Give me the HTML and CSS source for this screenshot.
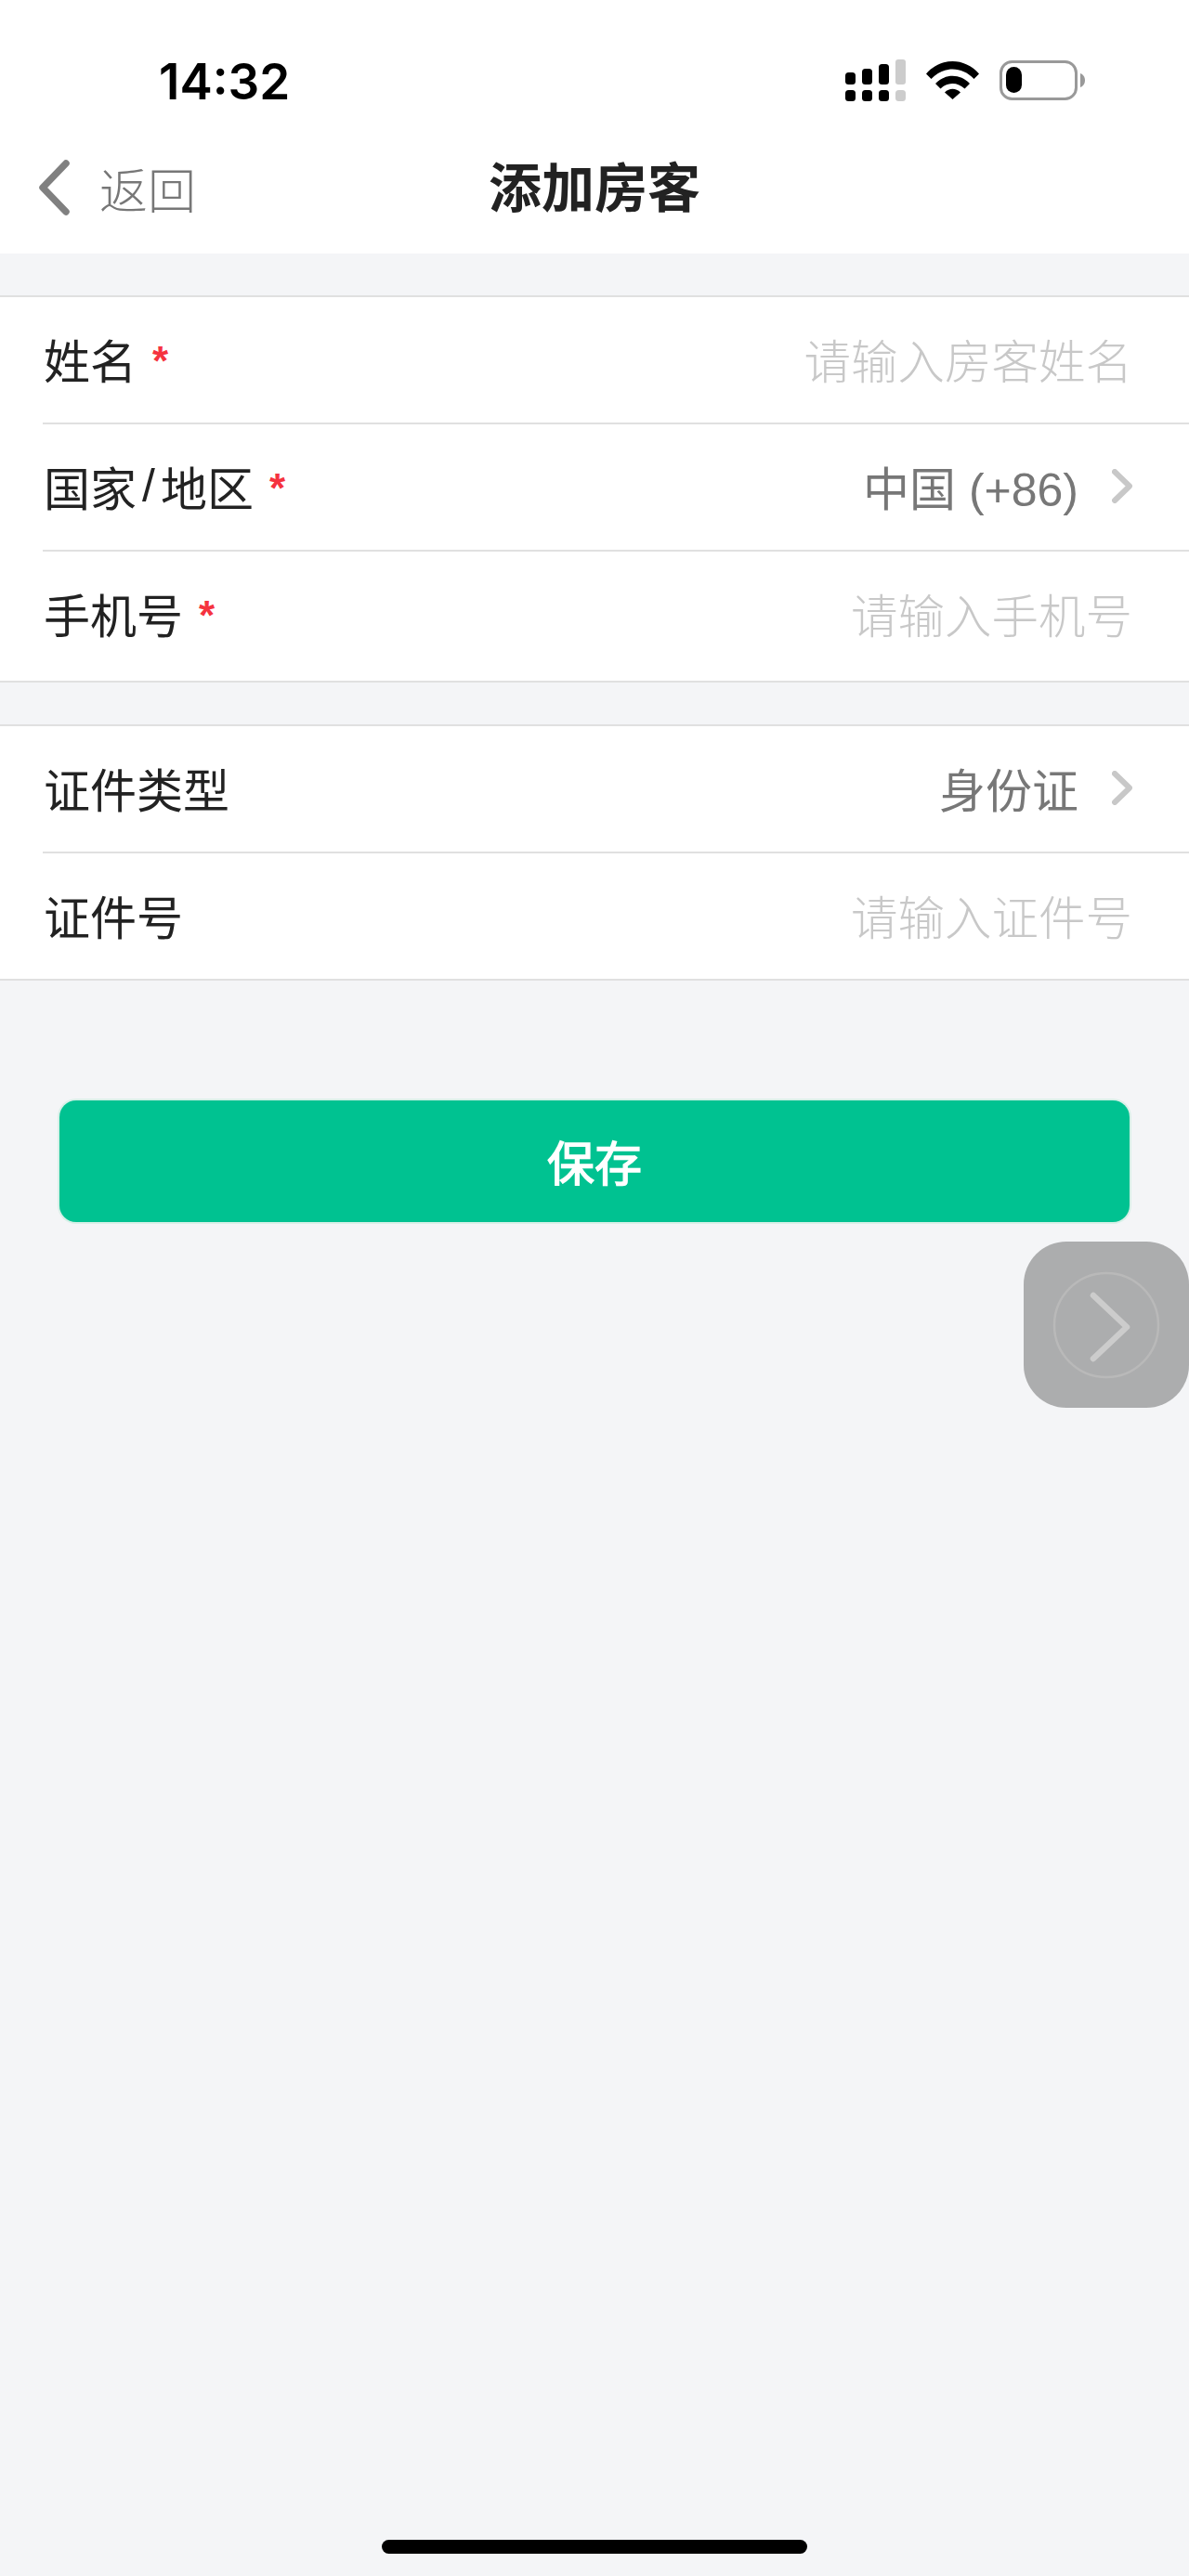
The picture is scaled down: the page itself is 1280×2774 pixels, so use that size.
FILE: index.html
```html
<!DOCTYPE html>
<html lang="zh-CN">
<head>
<meta charset="utf-8"/>
<meta content="width=device-width, initial-scale=1.0" name="viewport"/>
<title>添加房客</title>
<link rel="stylesheet" href="styles.css">
</head>
<body>
<div class="top">
    <div class="status-bar">
        <span class="time">14:32</span>
        <div class="status-icons">
            <svg width="65" height="45" viewBox="0 0 65 45">
                <rect x="0" y="14" width="11" height="13" rx="3.5"/>
                <rect x="18" y="10" width="11" height="17" rx="3.5"/>
                <rect x="36" y="5" width="11" height="22" rx="3.5"/>
                <rect x="54" y="0" width="11" height="27" rx="3" fill="#cccccc"/>
                <rect x="0" y="33" width="11" height="12" rx="3.5"/>
                <rect x="18" y="33" width="11" height="12" rx="3.5"/>
                <rect x="36" y="33" width="11" height="12" rx="3.5"/>
                <rect x="54" y="33" width="11" height="12" rx="3.5" fill="#cccccc"/>
            </svg>
            <svg class="wifi" width="57" height="41" viewBox="0 0 57 41">
                <path d="M0 13.5C15.500 -4.500 41.500 -4.500 57 13.500L51.500 19C38.500 5 18.500 5 5.500 19Z"/>
                <path d="M10 24C20 13 37 13 47 24L41.500 29.500C34 22 23 22 15.500 29.500Z"/>
                <path d="M20 33.500C25 28.500 32 28.500 37 33.500L28.500 41Z"/>
            </svg>
            <svg class="battery" width="92" height="43" viewBox="0 0 92 43">
                <rect x="1.500" y="1.500" width="81" height="40" rx="12" fill="none" stroke="#999999" stroke-width="3"/>
                <rect x="7" y="7" width="17" height="28" rx="8.500"/>
                <path d="M87 14C90 15 92 18 92 21.500C92 25 90 28 87 29Z" fill="#999999"/>
            </svg>
        </div>
    </div>
    <nav class="nav-bar">
        <a class="back" href="#">
            <svg width="34" height="60" viewBox="0 0 34 60">
                <path d="M30 4L5 30L30 56" fill="none" stroke="#808080" stroke-width="7.500" stroke-linecap="round" stroke-linejoin="round"/>
            </svg>
            <span>返回</span>
        </a>
        <h1>添加房客</h1>
        <div></div>
    </nav>
</div>

<section class="group group-tall">
    <div class="row">
        <div class="row-body">
            <label>姓名<i class="req">*</i></label>
            <span class="placeholder">请输入房客姓名</span>
        </div>
    </div>
    <div class="row">
        <div class="row-body">
            <label>国家<span class="slash">/</span>地区<i class="req">*</i></label>
            <span class="value">中国 (+86)</span>
            <svg class="arrow" width="22" height="37" viewBox="0 0 22 37">
                <path d="M3 3L19 18.500L3 34" fill="none" stroke="#c8c8c8" stroke-width="6" stroke-linecap="round" stroke-linejoin="round"/>
            </svg>
        </div>
    </div>
    <div class="row">
        <div class="row-body">
            <label>手机号<i class="req">*</i></label>
            <span class="placeholder">请输入手机号</span>
        </div>
    </div>
</section>

<section class="group">
    <div class="row">
        <div class="row-body">
            <label>证件类型</label>
            <span class="value">身份证</span>
            <svg class="arrow" width="22" height="37" viewBox="0 0 22 37">
                <path d="M3 3L19 18.500L3 34" fill="none" stroke="#c8c8c8" stroke-width="6" stroke-linecap="round" stroke-linejoin="round"/>
            </svg>
        </div>
    </div>
    <div class="row">
        <div class="row-body">
            <label>证件号</label>
            <span class="placeholder">请输入证件号</span>
        </div>
    </div>
</section>

<button class="save-btn">保存</button>

<!-- floating next button -->
<div class="float-btn">
    <svg width="120" height="120" viewBox="0 0 120 120">
        <circle cx="60" cy="60" r="56" fill="none" stroke="#b9b9b9" stroke-width="2.500"/>
        <path d="M46 28L82 62L46 96" fill="none" stroke="#cccccc" stroke-width="6.500" stroke-linecap="round" stroke-linejoin="round"/>
    </svg>
</div>

<div class="home-bar"></div>
</body>
</html>
```

FILE: styles.css
```css
html, body {
    height: 100%;
    margin: 0;
}
body {
    display: flex;
    flex-direction: column;
    position: relative;
    background: #f4f5f7;
    color: #222222;
    font-family: "Liberation Sans", "Noto Sans CJK SC", sans-serif;
    font-size: 50px;
}
.top {
    background: white;
}
.status-bar {
    height: 131px;
    padding: 41px 0 0 171px;
    box-sizing: border-box;
    display: flex;
    align-items: center;
    justify-content: space-between;
}
.time {
    padding-top: 5px;
    font-family: Inter, sans-serif;
    font-size: 53px;
    font-weight: 600;
    color: black;
    line-height: 1;
}
.status-icons {
    display: flex;
    align-items: center;
    gap: 22px;
    margin-right: 112px;
}
.status-icons svg {
    display: block;
}
.nav-bar {
    height: 142px;
    display: grid;
    grid-template-columns: 1fr auto 1fr;
    align-items: center;
}
.back {
    display: flex;
    align-items: center;
    gap: 32px;
    padding-left: 41px;
    color: #777777;
    font-size: 52px;
    font-weight: 300;
    text-decoration: none;
}
.nav-bar h1 {
    margin: 0;
    padding-top: 2px;
    font-size: 57px;
    font-weight: 700;
    line-height: 1.2;
}
.group {
    margin-top: 45px;
    background: white;
    border-top: 2px solid #e0e0e0;
    border-bottom: 2px solid #e0e0e0;
}
.group-tall {
    padding-bottom: 4px;
}
.row {
    padding-left: 46px;
}
.row-body {
    height: 137px;
    box-sizing: border-box;
    padding: 0 61px 3px 1px;
    display: flex;
    align-items: center;
    justify-content: space-between;
    border-bottom: 2px solid #e0e0e0;
}
.row:last-child .row-body {
    height: 135px;
    border-bottom: none;
}
.row label {
    display: flex;
    align-items: center;
    margin-right: auto;
}
.slash {
    margin: 0 6px;
}
.req {
    margin-left: 17px;
    margin-top: 6px;
    color: #f5333f;
    font-family: "Liberation Sans", sans-serif;
    font-style: normal;
    font-weight: 700;
    font-size: 44px;
    line-height: 1;
}
.placeholder {
    color: #c8c8c8;
    font-size: 50.5px;
    font-weight: 300;
}
.value {
    color: #777777;
}
.arrow {
    margin-left: 36px;
}
.save-btn {
    display: block;
    margin: 129px 64px 0;
    height: 131px;
    padding-bottom: 3px;
    border: none;
    border-radius: 18px;
    background: #00c291;
    box-shadow: 0 0 0 2px #d8f0e8;
    color: white;
    font-family: inherit;
    font-size: 51px;
    -webkit-text-stroke: 1.4px white;
}
.float-btn {
    position: absolute;
    top: 1337px;
    right: 0;
    width: 178px;
    height: 179px;
    border-radius: 46px;
    background: #acadae;
    display: flex;
    align-items: center;
    justify-content: center;
}
.home-bar {
    width: 458px;
    height: 15px;
    margin: auto auto 24px;
    border-radius: 8px;
    background: black;
}
```
